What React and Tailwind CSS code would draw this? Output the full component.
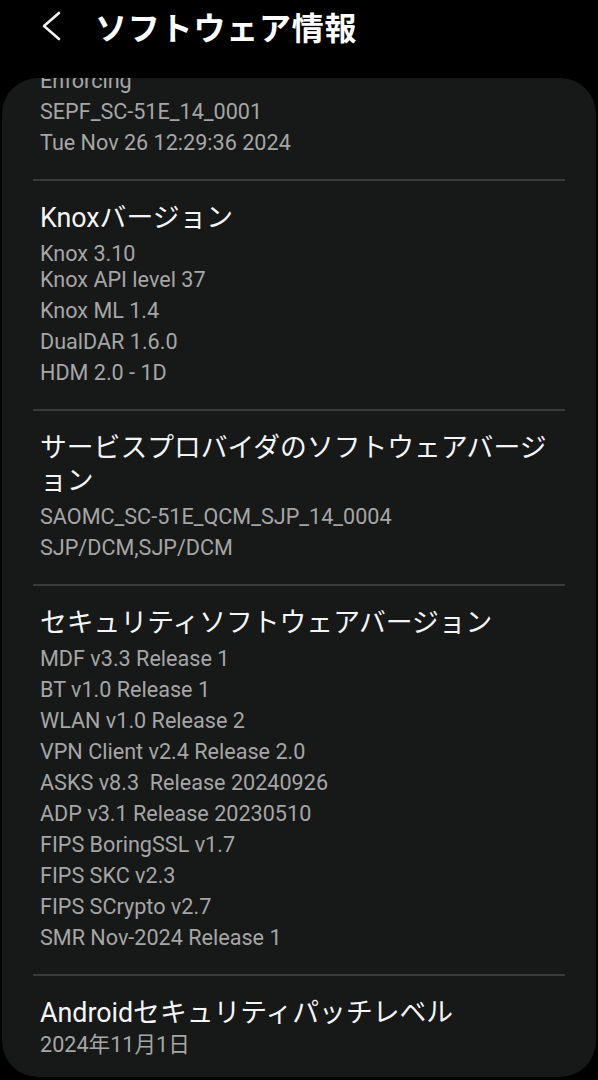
import React from "react";

const font = "font-['Roboto','Noto_Sans_CJK_JP',sans-serif]";

const sections = [
  {
    title: "SE for Android ステータス",
    lines: ["Enforcing", "SEPF_SC-51E_14_0001", "Tue Nov 26 12:29:36 2024"],
    clipped: true,
  },
  {
    title: "Knoxバージョン",
    lines: ["Knox 3.10", "Knox API level 37", "Knox ML 1.4", "DualDAR 1.6.0", "HDM 2.0 - 1D"],
    tightSecond: true,
  },
  {
    title: "サービスプロバイダのソフトウェアバージョン",
    lines: ["SAOMC_SC-51E_QCM_SJP_14_0004", "SJP/DCM,SJP/DCM"],
  },
  {
    title: "セキュリティソフトウェアバージョン",
    lines: [
      "MDF v3.3 Release 1",
      "BT v1.0 Release 1",
      "WLAN v1.0 Release 2",
      "VPN Client v2.4 Release 2.0",
      "ASKS v8.3  Release 20240926",
      "ADP v3.1 Release 20230510",
      "FIPS BoringSSL v1.7",
      "FIPS SKC v2.3",
      "FIPS SCrypto v2.7",
      "SMR Nov-2024 Release 1",
    ],
  },
  {
    title: "Androidセキュリティパッチレベル",
    lines: ["2024年11月1日"],
    last: true,
  },
];

const Section = ({ section }) => (
  <div className={section.clipped ? "pb-[21px] -mt-[49px]" : "pt-[21px] pb-[21px]"}>
    <div className="px-[7px] text-[26.8px] leading-[33px] text-[#f5f5f5]">{section.title}</div>
    <div
      className={`${section.last ? "-mt-[1px]" : "mt-[3px]"} px-[7px] text-[21.6px] text-[#a6a6a6] whitespace-pre`}
    >
      {section.lines.map((line, i) => (
        <div
          key={i}
          className={section.tightSecond && i === 1 ? "leading-[31px] -mt-[5px]" : "leading-[31px]"}
        >
          {line}
        </div>
      ))}
    </div>
  </div>
);

export default function App() {
  return (
    <div className={`bg-black w-[598px] h-[1080px] overflow-hidden ${font}`}>
      <div className="h-[52px] flex items-center">
        <svg width="22" height="32" viewBox="0 0 22 32" className="ml-[40px]">
          <polyline points="19,3 4,16 19,29" fill="none" stroke="#f2f2f2" strokeWidth="2.6" strokeLinecap="round" strokeLinejoin="round" />
        </svg>
        <div className="ml-[33px] text-[32px] leading-[40px] font-bold text-white tracking-[0.8px] font-['Noto_Sans_CJK_JP',sans-serif]">
          ソフトウェア情報
        </div>
      </div>
      <div className="mt-[26px] mx-[2px] h-[999px] rounded-[36px] bg-[#171818] overflow-hidden">
        <div className="px-[31px]">
          {sections.map((s, i) => (
            <div key={i}>
              {i > 0 && <div className="h-[2px] bg-[#3a3a3a]" />}
              <Section section={s} />
            </div>
          ))}
        </div>
      </div>
    </div>
  );
}
